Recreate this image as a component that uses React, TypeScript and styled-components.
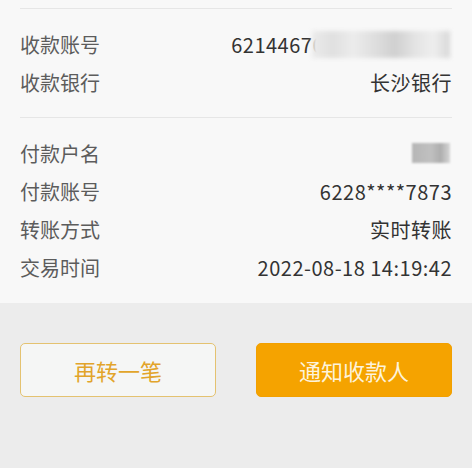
import styled, { createGlobalStyle } from "styled-components";

const GlobalStyle = createGlobalStyle`
  html, body {
    margin: 0;
    padding: 0;
    background: #ececec;
  }
  body {
    font-family: "Noto Sans CJK SC", "Noto Sans", sans-serif;
  }
`;

type Row = { label: string; value?: string; masked?: "account" | "name" };

const receiver: Row[] = [
  { label: "收款账号", value: "62144670", masked: "account" },
  { label: "收款银行", value: "长沙银行" },
];

const payer: Row[] = [
  { label: "付款户名", masked: "name" },
  { label: "付款账号", value: "6228****7873" },
  { label: "转账方式", value: "实时转账" },
  { label: "交易时间", value: "2022-08-18 14:19:42" },
];

export default function App() {
  return (
    <>
      <GlobalStyle />
      <Page>
        <Card>
          <Divider />
          <Section>
            {receiver.map((r) => (
              <InfoRow key={r.label} row={r} />
            ))}
          </Section>
          <Divider />
          <Section $bottom={17}>
            {payer.map((r) => (
              <InfoRow key={r.label} row={r} />
            ))}
          </Section>
        </Card>

        <Actions>
          <OutlineButton>再转一笔</OutlineButton>
          <PrimaryButton>通知收款人</PrimaryButton>
        </Actions>
      </Page>
    </>
  );
}

function InfoRow({ row }: { row: Row }) {
  return (
    <RowBox>
      <Label>{row.label}</Label>
      <Value>
        {row.value && <span>{row.value}</span>}
        {row.masked === "account" && <AccountBlur />}
        {row.masked === "name" && <NameBlur />}
      </Value>
    </RowBox>
  );
}

const Page = styled.div`
  width: 472px;
  height: 468px;
  display: flex;
  flex-direction: column;
  background: #ececec;
  overflow: hidden;
`;

const Card = styled.div`
  background: #f8f8f8;
  padding: 8px 20px 0;
  display: flex;
  flex-direction: column;
`;

const Divider = styled.div`
  height: 1px;
  background: #e6e6e6;
`;

const Section = styled.div<{ $bottom?: number }>`
  display: flex;
  flex-direction: column;
  padding: 16px 0 ${(p) => p.$bottom ?? 16}px;
`;

const RowBox = styled.div`
  display: flex;
  align-items: center;
  justify-content: space-between;
  height: 38px;
`;

const Label = styled.span`
  font-size: 20px;
  color: #5c5c5c;
`;

const Value = styled.span`
  display: flex;
  align-items: center;
  font-size: 20px;
  letter-spacing: 0.5px;
  color: #333;
`;

const AccountBlur = styled.span`
  display: inline-block;
  width: 138px;
  height: 27px;
  margin-left: -12px;
  margin-right: 2px;
  background: linear-gradient(
    90deg,
    #ebebeb 0%,
    #e0e0e0 15%,
    #ececec 30%,
    #dadada 50%,
    #d0d0d0 60%,
    #e4e4e4 75%,
    #eeeeee 88%,
    #d8d8d8 100%
  );
  filter: blur(2px);
`;

const NameBlur = styled.span`
  display: inline-block;
  width: 38px;
  height: 20px;
  margin-right: 2px;
  background: linear-gradient(90deg, #b6b6b6 0%, #c0c0c0 50%, #aeaeae 75%, #d6d6d6 100%);
  filter: blur(0.8px);
`;

const Actions = styled.div`
  display: grid;
  grid-template-columns: 1fr 1fr;
  gap: 40px;
  padding: 40px 20px 0;
`;

const BaseButton = styled.button`
  height: 54px;
  border-radius: 5px;
  font-family: "Noto Sans CJK SC", "Noto Sans", sans-serif;
  font-size: 22px;
  cursor: pointer;
`;

const OutlineButton = styled(BaseButton)`
  background: #f5f6f5;
  border: 1.5px solid #e4c270;
  color: #e2a42a;
`;

const PrimaryButton = styled(BaseButton)`
  background: #f5a300;
  border: 1px solid #f2a000;
  color: #fdf3dc;
`;
